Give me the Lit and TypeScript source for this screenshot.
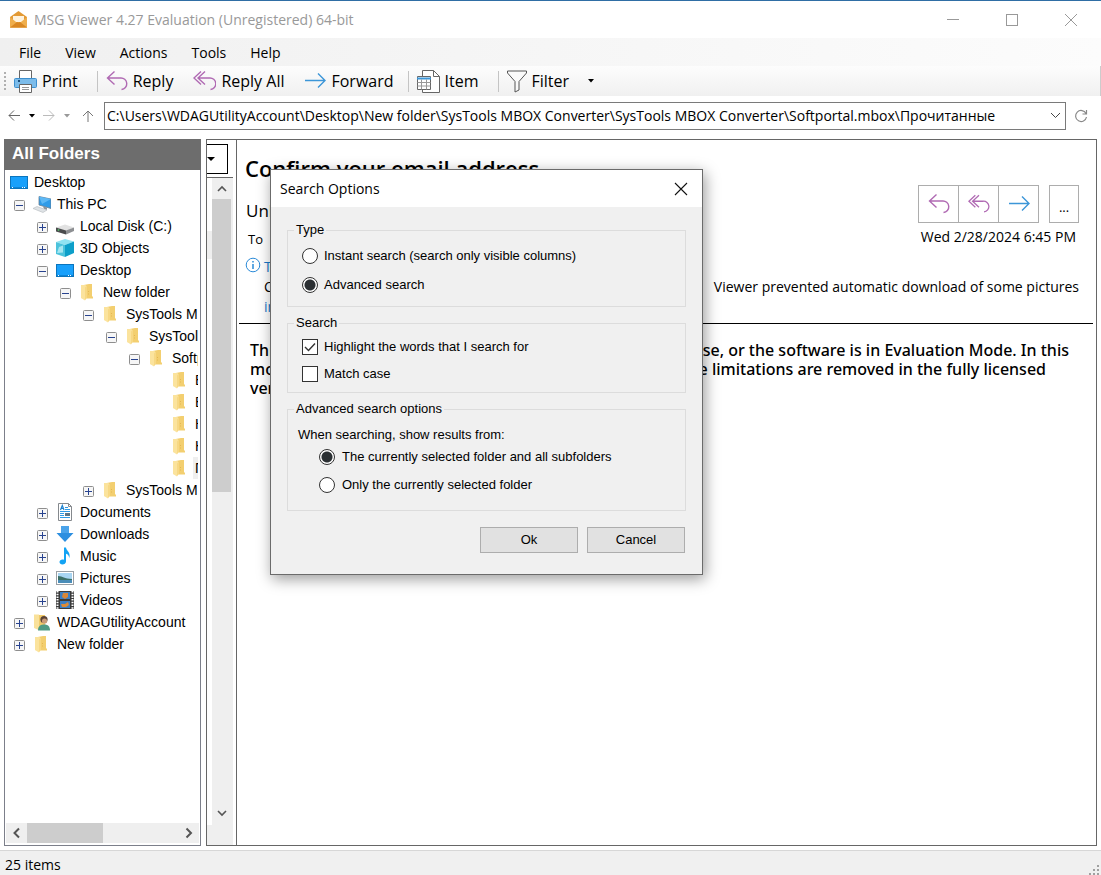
import { LitElement, html, svg, css, nothing, TemplateResult } from "lit";
import { customElement, property, state } from "lit/decorators.js";
import { classMap } from "lit/directives/class-map.js";

type IconName =
  | "desktop" | "pc" | "disk" | "cube" | "folder" | "doc" | "down"
  | "music" | "pic" | "video" | "user";

interface TreeRow {
  level: number;
  icon: IconName;
  label: string;
  open?: boolean;
  selected?: boolean;
}

const ROWS: TreeRow[] = [
  { level: 0, icon: "desktop", label: "Desktop" },
  { level: 1, icon: "pc", label: "This PC", open: true },
  { level: 2, icon: "disk", label: "Local Disk (C:)", open: false },
  { level: 2, icon: "cube", label: "3D Objects", open: false },
  { level: 2, icon: "desktop", label: "Desktop", open: true },
  { level: 3, icon: "folder", label: "New folder", open: true },
  { level: 4, icon: "folder", label: "SysTools MBOX Converter", open: true },
  { level: 5, icon: "folder", label: "SysTools MBOX Converter", open: true },
  { level: 6, icon: "folder", label: "Softportal.mbox", open: true },
  { level: 7, icon: "folder", label: "Важные" },
  { level: 7, icon: "folder", label: "Входящие" },
  { level: 7, icon: "folder", label: "Корзина" },
  { level: 7, icon: "folder", label: "Нежелательные" },
  { level: 7, icon: "folder", label: "Прочитанные", selected: true },
  { level: 4, icon: "folder", label: "SysTools MBOX Converter", open: false },
  { level: 2, icon: "doc", label: "Documents", open: false },
  { level: 2, icon: "down", label: "Downloads", open: false },
  { level: 2, icon: "music", label: "Music", open: false },
  { level: 2, icon: "pic", label: "Pictures", open: false },
  { level: 2, icon: "video", label: "Videos", open: false },
  { level: 1, icon: "user", label: "WDAGUtilityAccount", open: false },
  { level: 1, icon: "folder", label: "New folder", open: false },
];

const folderShape = svg`
  <path d="M2 2.500 10 1h3v12.500h1v2H7L2 15z" fill="#f3cf70"/>
  <path d="M2 2h4.500l1 1.500V15l-1.500 2.500L2 15z" fill="#fbe39d"/>
  <path d="M6 3.500 7.500 5v10L6 17z" fill="#f7d884"/>
  <path d="M9.500 8v5" stroke="#e5b653" stroke-dasharray="1 1.500" fill="none"/>`;

const TREE_ICONS: Record<IconName, TemplateResult<2>> = {
  desktop: svg`<rect x=".5" y="3.500" width="17" height="12" fill="#18a0fb" stroke="#0b75bd"/>
    <path d="M1 14.500h16" stroke="#0c83d6"/><path d="M2 14.500h1M12 14.500h1M14 14.500h1" stroke="#fff"/>`,
  pc: svg`<path d="M6 1.500 18 4v9.500L6 10z" fill="#2f9be8" stroke="#6b7f90" stroke-width=".8"/>
    <path d="M6 1.500 18 4 9 9z" fill="#5db8f5"/><path d="M10 11.500 14 12.500V15l-3-1z" fill="#8b9299"/>
    <path d="M0 13.500 4 11.500 14 15 10 17.500z" fill="#dfe3e6" stroke="#b3b9be" stroke-width=".6"/>`,
  disk: svg`<path d="M0 10.500 9 7.500l9 3-8 3.500z" fill="#e2e2e2"/><path d="M0 10.500 10 13.500v4L0 14.500z" fill="#4b4c4e"/>
    <path d="M10 13.500 18 10.500v3.500l-8 3.500z" fill="#8d8f92"/><circle cx="2.500" cy="13" r=".8" fill="#4fe06d"/>`,
  cube: svg`<path d="M9 0 18 2.500 9 6 0 3z" fill="#8fe3f2"/><path d="M0 3 9 6v12L0 15z" fill="#4cc3dc"/>
    <path d="M9 6 18 2.500V14L9 18z" fill="#0d9fc9"/><path d="M3 8 7 6.500v7L1 14z" fill="#a5e6f1"/>`,
  folder: folderShape,
  doc: svg`<path d="M2.500.5h10l3 3v14h-13z" fill="#fff" stroke="#85898d"/><path d="M12.500.5v3h3" fill="none" stroke="#85898d"/>
    <path d="M9 4.500h3M9 6.500h5M4 8.500h10M4 10.500h4M4 12.500h4M4 14.500h10" stroke="#2f9be6"/>
    <path d="m4.500 7 1.800-4.500L8 7M5 5.500h2.500" fill="none" stroke="#1e83d0" stroke-width="1.200"/><path d="M9 10h5v3H9z" fill="#5c7687"/>`,
  down: svg`<path d="M5 1h8v7h4.500L9 17 .5 8H5z" fill="#2d8fe0"/><path d="M5 1h8v7H5z" fill="#4aa3ea"/>`,
  music: svg`<path d="M8 .5h2c.3 3.500 5 4.500 3.200 10.500-.2-2.500-1.200-3.700-3.200-4.300v7.800c0 3.500-6.500 4-6.500.6 0-2.200 2.500-3.200 4.500-2.300z" fill="#12a3f4"/>`,
  pic: svg`<rect x=".5" y="2.500" width="17" height="13" fill="#fff" stroke="#9aa0a5"/>
    <path d="M2 4h14v10H2z" fill="#a8d5f2"/><path d="M2 7c5 0 6 3 14 3v2H2z" fill="#3b6f66"/><path d="M2 11h14v3H2z" fill="#4a8db8"/>`,
  video: svg`<path d="M0 0h18v18H0z" fill="#3b3b3b"/><path d="M1.500 0v18M16.500 0v18" stroke="#fff" stroke-width="2" stroke-dasharray="1.500 1.200"/>
    <path d="M4 1h10v7H4zM4 10h10v7H4z" fill="#3c7fc4"/><path d="M7 2h5v4l-3 2-3-2z" fill="#d8873a"/>
    <path d="M5 13h4l3-2 1 3-3 2H6z" fill="#dd8b36"/>`,
  user: svg`<path d="M1 1.500h5l1 1.500V15l-1.500 2-4.500-2z" fill="#f9e19a"/><path d="M6 2h6v12H6z" fill="#f0ca6b"/>
    <circle cx="11" cy="6.500" r="3.600" fill="#5a4336"/><circle cx="11.500" cy="8" r="2.600" fill="#c99b77"/>
    <path d="M5 17.500c0-5 3-6 6.500-6s5.500 2 5.500 6z" fill="#4f9b84"/>`,
};

const replyPath = svg`<path d="M8.500 1.500 1.500 8l7 6.500M1.500 8h13a5.700 5.700 0 0 1 1 11.500" fill="none" stroke="#b06ab3" stroke-width="1.400"/>`;
const replyAllPath = svg`<path d="M8 1.500 1 8l7 6.500M12 1.500 5 8l7 6.500M5 8h11.500a5.700 5.700 0 0 1 1 11.500" fill="none" stroke="#b06ab3" stroke-width="1.400"/>`;
const forwardPath = svg`<path d="M1 10.500h20M14 3.500l7 7-7 7" fill="none" stroke="#3c96d8" stroke-width="1.400"/>`;

const base = css`
  * { box-sizing: border-box; }
  button {
    font: inherit; color: inherit; background: none; border: 0;
    padding: 0; margin: 0; display: flex; align-items: center;
  }
  svg { display: block; flex: none; }
`;

@customElement("folder-tree")
export class FolderTree extends LitElement {
  static styles = [base, css`
    :host {
      display: flex; flex-direction: column; min-height: 0;
      border: 1px solid #7c7f8a;
      font: 14px/22px "Liberation Sans", Arial, sans-serif; color: #000; background: #fff;
    }
    .head {
      margin: -1px -1px 0; height: 31px; padding: 0 8px; background: #6d6d6d; color: #fff;
      font-size: 17px; line-height: 30px; font-weight: bold;
    }
    .list { flex: 1; min-height: 0; margin: 1px 2px 0 0; padding: 0; overflow: hidden; list-style: none; }
    .row { display: flex; align-items: center; height: 22px; white-space: nowrap; }
    .slot { flex: none; width: 19px; padding-top: 2px; }
    .toggle { width: 11px; height: 11px; }
    .icon { flex: none; width: 22px; }
    .name { padding: 0 2px; }
    .selected .name { background: #efefef; }
    .scroll { display: flex; height: 20px; margin: 0 1px 2px; background: #efefef; }
    .arrow { width: 21px; justify-content: center; }
    .track { flex: 1; }
    .thumb { width: 50%; height: 100%; background: #cdcdcd; }
  `];

  @state() private rows = ROWS;

  private toggleIcon(open: boolean) {
    return html`<svg width="11" height="11" viewBox="0 0 11 11">
      <rect x=".5" y=".5" width="10" height="10" rx="1" fill="#f6f6f6" stroke="#8e8e8e"/>
      <path d=${open ? "M2 5.500h7" : "M2 5.500h7M5.500 2v7"} stroke="#28438f"/></svg>`;
  }

  render() {
    return html`
      <div class="head">All Folders</div>
      <ul class="list">
        ${this.rows.map((r) => html`
          <li class=${classMap({ row: true, selected: !!r.selected })}
              style="padding-left:${r.level === 0 ? 5 : 9 + (r.level - 1) * 23}px">
            ${r.level === 0 ? nothing : html`<span class="slot">${r.open === undefined ? nothing
              : html`<button class="toggle" aria-label="Toggle ${r.label}">${this.toggleIcon(r.open)}</button>`}</span>`}
            <span class="icon"><svg width="18" height="18" viewBox="0 0 18 18">${TREE_ICONS[r.icon]}</svg></span>
            <span class="name">${r.label}</span>
          </li>`)}
      </ul>
      <div class="scroll">
        <button class="arrow" aria-label="Scroll left"><svg width="8" height="12" viewBox="0 0 8 12"><path d="M6 1.500 1.500 6 6 10.500" fill="none" stroke="#555" stroke-width="2"/></svg></button>
        <div class="track"><div class="thumb"></div></div>
        <button class="arrow" aria-label="Scroll right"><svg width="8" height="12" viewBox="0 0 8 12"><path d="M1.500 1.500 6 6l-4.500 4.500" fill="none" stroke="#555" stroke-width="2"/></svg></button>
      </div>`;
  }
}

@customElement("message-view")
export class MessageView extends LitElement {
  static styles = [base, css`
    :host {
      display: block; min-width: 0; border: 1px solid #666; background: #fff; color: #000;
      font: 14px/20px "Open Sans", "Noto Sans", sans-serif;
    }
    .subject { margin: 12px 8px 0; font-size: 22px; line-height: 33px; font-weight: 600; }
    .meta { display: flex; justify-content: space-between; padding: 0 17px 0 9px; }
    .from { font-size: 17px; line-height: 28px; padding-top: 12px; }
    .to { font-size: 13px; line-height: 28px; padding-left: 2px; }
    .actions { display: flex; justify-content: flex-end; gap: 10px; }
    .group { display: flex; border: 1px solid #adadad; }
    .act { width: 39px; height: 36px; justify-content: center; }
    .act + .act { width: 40px; border-left: 1px solid #adadad; }
    .more { width: 30px; height: 38px; border: 1px solid #adadad; justify-content: center; font-size: 13px; padding-top: 6px; }
    .date { line-height: 28px; padding-right: 3px; text-align: right; }
    .info { display: grid; grid-template-columns: 19px 1fr; padding: 4px 17px 0 8px; }
    .notice { display: flex; justify-content: space-between; }
    .link { display: block; color: #1979ca; text-decoration: none; }
    .rule { border: 0; border-top: 1px solid #000; margin: 6px 3px 17px 2px; }
    .body {
      display: grid; grid-template-columns: auto 1fr; padding: 0 27px 0 13px;
      font-family: "Noto Sans", "Open Sans", sans-serif; font-size: 16px; line-height: 19px; font-weight: 500;
    }
    .end { text-align: right; white-space: nowrap; }
    .end.short { padding-right: 23px; }
  `];

  render() {
    return html`
      <h1 class="subject">Confirm your email address</h1>
      <div class="meta">
        <div>
          <div class="from">Unknown</div>
          <div class="to">To</div>
        </div>
        <div>
          <div class="actions">
            <div class="group">
              <button class="act" aria-label="Reply"><svg width="22" height="22" viewBox="0 0 22 22">${replyPath}</svg></button>
              <button class="act" aria-label="Reply all"><svg width="22" height="22" viewBox="0 0 24 22">${replyAllPath}</svg></button>
              <button class="act" aria-label="Forward"><svg width="22" height="22" viewBox="0 0 22 22">${forwardPath}</svg></button>
            </div>
            <button class="more" aria-label="More">...</button>
          </div>
          <div class="date">Wed 2/28/2024 6:45 PM</div>
        </div>
      </div>
      <div class="info">
        <svg width="16" height="16" viewBox="0 0 16 16"><circle cx="8" cy="8" r="6.800" fill="none" stroke="#2a8ad8"/><path d="M8 7v5M8 4v1.500" stroke="#2a8ad8" stroke-width="1.500"/></svg>
        <div>
          <a class="link" href="#">This</a>
          <div class="notice"><span>Click</span><span>Viewer prevented automatic download of some pictures</span></div>
          <a class="link" href="#">in</a>
        </div>
      </div>
      <hr class="rule" />
      <div class="body">
        <span>This</span><span class="end">license, or the software is in Evaluation Mode. In this</span>
        <span>mode</span><span class="end short">These limitations are removed in the fully licensed</span>
        <span>version.</span>
      </div>`;
  }
}

@customElement("search-options")
export class SearchOptions extends LitElement {
  @property() heading = "Search Options";

  static styles = [base, css`
    :host {
      display: block; border: 1px solid #6b6b6b; background: #f0f0f0; color: #000;
      box-shadow: 2px 4px 14px rgba(0, 0, 0, .4);
      font: 13px/16px "Liberation Sans", Arial, sans-serif;
    }
    .title {
      display: flex; align-items: center; justify-content: space-between; height: 37px;
      padding: 0 14px 0 9px; background: #fff; font: 14px/20px "Open Sans", "Noto Sans", sans-serif;
    }
    .content { display: flex; flex-direction: column; gap: 8px; padding: 15px 16px 21px; }
    .set { margin: 0; border: 1px solid #dcdcdc; padding: 3px 14px 7px; }
    .set.checks { padding: 2px 14px 5px; }
    .set.scope { padding: 10px 10px 11px; }
    legend { margin-left: -8px; padding: 0 2px; }
    .scope legend { margin-left: -4px; }
    .opt { display: flex; align-items: center; gap: 6px; height: 29px; }
    .checks .opt { height: 27px; }
    .scope .opt { height: 28px; padding-left: 21px; gap: 7px; }
    .note { margin: 0; }
    input {
      appearance: none; flex: none; width: 16px; height: 16px; margin: 0;
      border: 1px solid #333; background: #fff;
    }
    input[type="radio"] { border-radius: 50%; }
    input[type="radio"]:checked { background: radial-gradient(circle, #2b3033 5px, #fff 6px); }
    .check { display: grid; }
    .check > * { grid-area: 1 / 1; }
    .check svg { pointer-events: none; z-index: 1; }
    .buttons { display: flex; justify-content: flex-end; gap: 9px; padding: 8px 1px 0 0; }
    .btn { width: 98px; height: 26px; border: 1px solid #adadad; background: #e1e1e1; justify-content: center; }
  `];

  private radio(name: string, label: string, on = false) {
    return html`<label class="opt"><input type="radio" name=${name} ?checked=${on} /><span>${label}</span></label>`;
  }

  private check(label: string, on = false) {
    return html`<label class="opt"><span class="check"><input type="checkbox" ?checked=${on} />${on
      ? html`<svg width="16" height="16" viewBox="0 0 16 16"><path d="m3 8 3.500 3.500L13 4.500" fill="none" stroke="#333" stroke-width="1.400"/></svg>`
      : nothing}</span><span>${label}</span></label>`;
  }

  render() {
    return html`
      <div class="title"><span>${this.heading}</span>
        <button aria-label="Close"><svg width="14" height="14" viewBox="0 0 14 14"><path d="m1 1 12 12M13 1 1 13" stroke="#111" stroke-width="1.100"/></svg></button>
      </div>
      <div class="content">
        <fieldset class="set"><legend>Type</legend>
          ${this.radio("type", "Instant search (search only visible columns)")}
          ${this.radio("type", "Advanced search", true)}
        </fieldset>
        <fieldset class="set checks"><legend>Search</legend>
          ${this.check("Highlight the words that I search for", true)}
          ${this.check("Match case")}
        </fieldset>
        <fieldset class="set scope"><legend>Advanced search options</legend>
          <p class="note">When searching, show results from:</p>
          ${this.radio("scope", "The currently selected folder and all subfolders", true)}
          ${this.radio("scope", "Only the currently selected folder")}
        </fieldset>
        <div class="buttons"><button class="btn">Ok</button><button class="btn">Cancel</button></div>
      </div>`;
  }
}

@customElement("app-root")
export class AppRoot extends LitElement {
  static styles = [base, css`
    :host {
      position: relative; display: flex; flex-direction: column; height: 100vh; overflow: hidden;
      box-sizing: border-box; background: #fff; color: #000; border-top: 1px solid #2f6ea5;
      font: 14px/20px "Open Sans", "Noto Sans", sans-serif;
    }
    .titlebar { display: flex; align-items: center; height: 37px; padding: 0 1px 0 9px; color: #999; }
    .caption { flex: 1; padding-left: 6px; }
    .win { width: 59px; height: 37px; justify-content: center; }
    .menu { display: flex; gap: 24px; height: 28px; padding: 1px 19px 0; background: linear-gradient(90deg, #f0f0f0, #fcfcfc); }
    .tools {
      display: flex; align-items: center; height: 30px; padding-left: 4px; font-size: 16px;
      background: linear-gradient(#fdfdfd, #f0f0f0); border-right: 1px solid #ccc;
    }
    .tool { gap: 5px; height: 30px; padding: 0 12px 0 8px; }
    .tool.wide { padding: 0 14px 0 8px; }
    .tool.wider { padding: 0 19px 0 8px; }
    .sep { width: 1px; height: 21px; background: #c4c4c4; }
    .address { display: flex; align-items: center; height: 43px; padding: 0 13px 4px 8px; }
    .nav { width: 21px; }
    .nav.up { width: 22px; margin-left: 4px; }
    .nav.drop { width: 14px; }
    .box { flex: 1; display: flex; align-items: center; height: 28px; border: 1px solid #7a7a7a; padding-right: 4px; }
    .path { flex: 1; min-width: 0; border: 0; padding: 0 2px; background: none; font: inherit; color: #000; outline: 0; }
    .refresh { padding-left: 8px; }
    .main { flex: 1; display: flex; min-height: 0; padding: 0 4px 4px; }
    folder-tree { flex: none; width: 197px; margin-right: 5px; }
    .mails { flex: none; width: 30px; display: flex; flex-direction: column; border: 1px solid #666; border-right: 0; }
    .combo { width: 21px; height: 30px; margin-top: 4px; border: 1px solid #000; border-left: 0; }
    .pane { flex: 1; display: flex; min-height: 0; width: 26px; margin-top: 3px; border-top: 1px solid #666; background: #efefef; }
    .strip { width: 5px; margin-bottom: 20px; padding-top: 53px; background: #fff; }
    .picked { height: 28px; background: #efefef; }
    .vscroll { display: flex; flex-direction: column; width: 20px; padding-bottom: 21px; }
    .varrow { width: 19px; height: 21px; justify-content: center; }
    .vtrack { flex: 1; }
    .vthumb { width: 19px; height: 48.5%; background: #cdcdcd; }
    message-view { flex: 1; }
    .status {
      display: flex; justify-content: space-between; align-items: flex-end; height: 25px;
      border-top: 1px solid #d7d7d7; padding: 0 2px 0 5px; background: #f0f0f0; line-height: 21px;
    }
    search-options { position: absolute; left: 270px; top: 168px; width: 433px; }
  `];

  private caret(color: string) {
    return html`<svg width="6" height="4" viewBox="0 0 6 4"><path d="M0 0h6L3 3.500z" fill=${color}/></svg>`;
  }

  render() {
    return html`
      <header class="titlebar">
        <svg width="19" height="19" viewBox="0 0 19 19"><path d="M1 7 9.500 1 18 7v10.500H1z" fill="#e39a35"/>
          <path d="M4 6h11v6H4z" fill="#fff3de"/><path d="m1 7 8.500 7L18 7v10.500H1z" fill="#efae4c"/><path d="M1 17.500 8 12l1.500 1 1.500-1 7 5.500z" fill="#d98723"/></svg>
        <span class="caption">MSG Viewer 4.27 Evaluation (Unregistered) 64-bit</span>
        <button class="win" aria-label="Minimize"><svg width="12" height="12" viewBox="0 0 12 12"><path d="M0 5.500h12" stroke="#999"/></svg></button>
        <button class="win" aria-label="Maximize"><svg width="12" height="12" viewBox="0 0 12 12"><rect x=".5" y=".5" width="11" height="11" fill="none" stroke="#999"/></svg></button>
        <button class="win" aria-label="Close"><svg width="12" height="12" viewBox="0 0 12 12"><path d="m0 0 12 12M12 0 0 12" stroke="#999"/></svg></button>
      </header>
      <nav class="menu">${["File", "View", "Actions", "Tools", "Help"].map((m) => html`<button>${m}</button>`)}</nav>
      <div class="tools">
        <svg width="2" height="20" viewBox="0 0 2 20"><path d="M1 1v19" stroke="#b0b0b0" stroke-width="2" stroke-dasharray="2 2"/></svg>
        <button class="tool wider">
          <svg width="23" height="23" viewBox="0 0 23 23"><path d="M5.500 9V.5h12V9" fill="#fff" stroke="#666"/><rect x=".5" y="8.500" width="22" height="9" rx="1" fill="#7cbcea" stroke="#3d8fce"/>
            <path d="M4 11h2" stroke="#1b4f7e" stroke-width="2"/><path d="M5.500 14.500h12v8h-12z" fill="#fff" stroke="#666"/><path d="M8 17.500h7M8 19.500h7" stroke="#999"/></svg>Print</button>
        <span class="sep"></span>
        <button class="tool"><svg width="22" height="22" viewBox="0 0 22 22">${replyPath}</svg>Reply</button>
        <button class="tool"><svg width="23" height="22" viewBox="0 0 23 22">${replyAllPath}</svg>Reply All</button>
        <button class="tool wide"><svg width="22" height="22" viewBox="0 0 22 22">${forwardPath}</svg>Forward</button>
        <span class="sep"></span>
        <button class="tool wider">
          <svg width="23" height="23" viewBox="0 0 23 23"><path d="M5.500.5h11l6 6v16h-17z" fill="#fff" stroke="#666"/><path d="M16.500.5v6h6" fill="none" stroke="#666"/>
            <path d="M.5 6.500h13v13H.5z" fill="#fff" stroke="#666"/><path d="M0 7.500h14v2H0z" fill="#3c96d8"/><path d="M.5 12.500h13M.5 16h13M4.500 9.500v10M9.500 9.500v10" stroke="#999"/></svg>Item</button>
        <span class="sep"></span>
        <button class="tool wider">
          <svg width="20" height="23" viewBox="0 0 20 23"><path d="M.5 1h19v2L12 11.500V20l-4 2V11.500L.5 3z" fill="#fafafa" stroke="#555"/></svg>Filter</button>
        ${this.caret("#000")}
      </div>
      <div class="address">
        <button class="nav" aria-label="Back"><svg width="12" height="11" viewBox="0 0 12 11"><path d="M12 5.500H1M6 .5l-5 5 5 5" fill="none" stroke="#666"/></svg></button>
        <button class="nav drop" aria-label="Back history">${this.caret("#000")}</button>
        <button class="nav" aria-label="Forward"><svg width="12" height="11" viewBox="0 0 12 11"><path d="M0 5.500h11M6 .5l5 5-5 5" fill="none" stroke="#bbb"/></svg></button>
        <button class="nav drop" aria-label="Forward history">${this.caret("#999")}</button>
        <button class="nav up" aria-label="Up"><svg width="12" height="12" viewBox="0 0 12 12"><path d="M6 12V1M1 6l5-5 5 5" fill="none" stroke="#777"/></svg></button>
        <div class="box">
          <input class="path" aria-label="Path" .value=${"C:\\Users\\WDAGUtilityAccount\\Desktop\\New folder\\SysTools MBOX Converter\\SysTools MBOX Converter\\Softportal.mbox\\Прочитанные"} />
          <button aria-label="Show paths"><svg width="11" height="7" viewBox="0 0 11 7"><path d="m1 1 4.500 4.500L10 1" fill="none" stroke="#444"/></svg></button>
        </div>
        <button class="refresh" aria-label="Refresh"><svg width="14" height="14" viewBox="0 0 14 14"><path d="M12 4.500A5.500 5.500 0 1 0 12.500 8M12.500 1v4h-4" fill="none" stroke="#888" stroke-width="1.200"/></svg></button>
      </div>
      <main class="main">
        <folder-tree></folder-tree>
        <div class="mails">
          <button class="combo" aria-label="Column"><svg width="8" height="5" viewBox="0 0 8 5"><path d="M0 0h8L4 4z" fill="#000"/></svg></button>
          <div class="pane">
            <div class="strip"><div class="picked"></div></div>
            <div class="vscroll">
              <button class="varrow" aria-label="Scroll up"><svg width="10" height="7" viewBox="0 0 10 7"><path d="m1 6 4-4 4 4" fill="none" stroke="#555" stroke-width="1.600"/></svg></button>
              <div class="vtrack"><div class="vthumb"></div></div>
              <button class="varrow" aria-label="Scroll down"><svg width="10" height="7" viewBox="0 0 10 7"><path d="m1 1 4 4 4-4" fill="none" stroke="#555" stroke-width="1.600"/></svg></button>
            </div>
          </div>
        </div>
        <message-view></message-view>
      </main>
      <footer class="status"><span>25 items</span>
        <svg width="10" height="10" viewBox="0 0 10 10"><path d="M8 0h2v2H8zM4 4h2v2H4zM8 4h2v2H8zM0 8h2v2H0zM4 8h2v2H4zM8 8h2v2H8z" fill="#a0a0a0"/></svg>
      </footer>
      <search-options role="dialog" aria-label="Search Options"></search-options>`;
  }
}
